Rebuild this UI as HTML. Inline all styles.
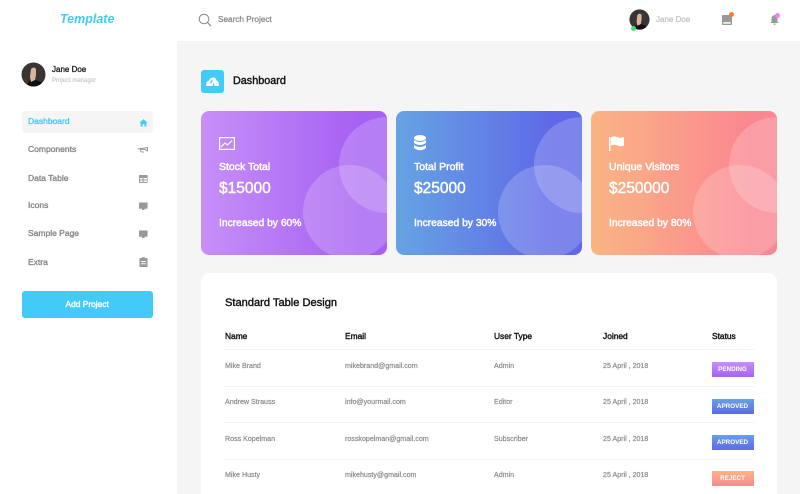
<!DOCTYPE html>
<html><head><meta charset="utf-8"><style>
*{box-sizing:border-box;margin:0;padding:0}
html,body{width:800px;height:494px;overflow:hidden;background:#f5f5f5;font-family:"Liberation Sans",sans-serif}
#w{position:relative;width:800px;height:494px;overflow:hidden;background:#f5f5f5}
.a{position:absolute;white-space:nowrap;line-height:1}
.side{position:absolute;left:0;top:0;width:177px;height:494px;background:#fff}
.top{position:absolute;left:177px;top:0;width:623px;height:41px;background:#fff}
.nav{font-size:8.5px;color:#868686;left:28px;-webkit-text-stroke:.35px currentColor}
.card{position:absolute;top:111px;width:186px;height:144px;border-radius:8px;overflow:hidden;color:#fff}
.card i{position:absolute;border-radius:50%;background:rgba(255,255,255,.19)}
.c1{left:138px;top:6px;width:96px;height:96px}
.c2{left:102px;top:54px;width:94px;height:94px}
.card .a{left:18px;color:#fff;-webkit-text-stroke:.45px #fff}
.t1{top:50.5px;font-size:10.5px}.t2{top:70px;font-size:15.5px}.t3{top:108px;font-size:10.3px}
.th{font-size:8.4px;color:#111;top:331.5px;-webkit-text-stroke:.4px #111}
.td{font-size:7.1px;color:#8a8a8a;-webkit-text-stroke:.2px #8a8a8a}
.line{position:absolute;left:225px;width:529px;height:1px;background:#f3f3f3}
.b{position:absolute;left:711.5px;width:42px;height:15px;color:#fff;font-size:6.3px;font-weight:bold;text-align:center;line-height:15.5px}
.ic{position:absolute}
</style></head><body><div id="w">
<div class="side"></div><div class="top"></div>
<div class="a" style="left:60px;top:13px;font-size:12.5px;font-weight:bold;font-style:italic;color:#43caf8">Template</div>

<svg class="ic" style="left:21px;top:62px" width="25" height="25" viewBox="0 0 25 25"><defs><clipPath id="av"><circle cx="12.5" cy="12.5" r="12"/></clipPath></defs><g clip-path="url(#av)"><rect width="25" height="25" fill="#3a3532"/><path d="M5 25l3-6 4-2 8 3 2 5z" fill="#111"/><path d="M10 7q3-3 5 0l0 6-1 5-4 2-1-5z" fill="#d8b69a"/></g></svg>
<div class="a" style="left:52px;top:65.5px;font-size:8px;color:#222;-webkit-text-stroke:.35px #222">Jane Doe</div>
<div class="a" style="left:52px;top:78px;font-size:6px;color:#c8c8c8;-webkit-text-stroke:.15px #c8c8c8">Project manager</div>

<div style="position:absolute;left:22px;top:111px;width:131px;height:22px;background:#f5f5f5;border-radius:4px"></div>
<div class="a nav" style="top:117px;color:#43caf8">Dashboard</div>
<div class="a nav" style="top:145.3px">Components</div>
<div class="a nav" style="top:173.5px">Data Table</div>
<div class="a nav" style="top:201px">Icons</div>
<div class="a nav" style="top:229px">Sample Page</div>
<div class="a nav" style="top:257.5px">Extra</div>

<svg class="ic" style="left:139px;top:118px" width="9" height="9" viewBox="0 0 9 9"><path d="M4.5 1L8.5 5H7.4V8.5H5.4V6H3.6V8.5H1.600V5H.5z" fill="#43caf8"/></svg>
<svg class="ic" style="left:137px;top:146px" width="11" height="8" viewBox="0 0 11 8"><path d="M.5 3L10.5 1.500V5L8 3.400H3.500Q3 5.500 5 6H7" fill="none" stroke="#999" stroke-width="1"/></svg>
<svg class="ic" style="left:139px;top:175px" width="9" height="8" viewBox="0 0 9 8"><path d="M.5 0h7.600q.5 0 .5.5v7q0 .5-.5.5H.5q-.5 0-.5-.5v-7Q0 0 .5 0zM1 3v1.500h2.500V3zM4.500 3v1.500H8V3zM1 5.500V7h2.500V5.500zM4.500 5.500V7H8V5.500z" fill="#999" fill-rule="evenodd"/></svg>
<svg class="ic" style="left:139px;top:202px" width="9" height="9" viewBox="0 0 9 9"><path d="M.5.5h7.600q.5 0 .5.5v5.200q0 .5-.5.5H5.600v1.300H3V6.700H.5Q0 6.700 0 6.200V1Q0 .5.5.5z" fill="#999"/></svg>
<svg class="ic" style="left:139px;top:229.5px" width="9" height="9" viewBox="0 0 9 9"><path d="M.5.5h7.600q.5 0 .5.5v5.200q0 .5-.5.5H5.600v1.300H3V6.700H.5Q0 6.700 0 6.200V1Q0 .5.5.5z" fill="#999"/></svg>
<svg class="ic" style="left:139px;top:257px" width="9" height="10" viewBox="0 0 9 10"><path d="M.5 1H3Q3.200 0 4.500 0T6 1H8.500V10H.5zM2.200 4V5H6.800V4zM2.200 6.300V7.300H6.800V6.300z" fill="#999" fill-rule="evenodd"/></svg>

<div class="a" style="left:21.7px;top:291px;width:131px;height:26.5px;border-radius:3px;background:#43caf8;color:#fff;font-size:8.4px;-webkit-text-stroke:.4px #fff;text-align:center;line-height:26px">Add Project</div>

<svg class="ic" style="left:198px;top:13px" width="14" height="14" viewBox="0 0 14 14"><circle cx="6" cy="6" r="4.800" fill="none" stroke="#888" stroke-width="1"/><path d="M9.500 9.500L13 13" stroke="#888" stroke-width="1.200"/></svg>
<div class="a" style="left:218px;top:15.5px;font-size:8.2px;color:#8c8c8c;-webkit-text-stroke:.3px #8c8c8c">Search Project</div>

<svg class="ic" style="left:629px;top:9px" width="21" height="21" viewBox="0 0 25 25"><g clip-path="url(#av)"><rect width="25" height="25" fill="#3a3532"/><path d="M5 25l3-6 4-2 8 3 2 5z" fill="#111"/><path d="M10 7q3-3 5 0l0 6-1 5-4 2-1-5z" fill="#d8b69a"/></g></svg>
<div style="position:absolute;left:630.5px;top:26px;width:5px;height:5px;border-radius:50%;background:#3ade7f"></div>
<div class="a" style="left:656px;top:16px;font-size:8px;color:#c4c4c4;-webkit-text-stroke:.3px #c4c4c4">Jane Doe</div>
<svg class="ic" style="left:722px;top:15px" width="10" height="10" viewBox="0 0 10 10"><path d="M1 0H9Q10 0 10 1V9Q10 10 9 10H1Q0 10 0 9V1Q0 0 1 0z" fill="#999"/><path d="M1.200 7H8.800V8.800H1.200z" fill="#eee"/></svg>
<div style="position:absolute;left:729px;top:12px;width:5px;height:5px;border-radius:50%;background:#fb7c2c"></div>
<svg class="ic" style="left:770px;top:15px" width="9" height="10" viewBox="0 0 9 10"><path d="M4.500 0Q7.500.5 7.500 4V6.800L9 8H0L1.500 6.800V4Q1.500.5 4.500 0zM3.200 8.600H5.800Q5.500 10 4.500 10T3.200 8.600z" fill="#999"/></svg>
<div style="position:absolute;left:775px;top:13px;width:5px;height:5px;border-radius:50%;background:#ee82f5"></div>

<div style="position:absolute;left:201px;top:70px;width:23px;height:23px;border-radius:3px;background:#43caf8"></div>
<svg class="ic" style="left:206px;top:77px" width="13" height="9" viewBox="0 0 13 9"><path d="M0 9Q0 4 3 3.500Q4.500 0 8 .5Q10 1 10.500 3.500Q13 4 13 9H8.500L7.500 5.500L6.500 9zM5.800 2.500L3.800 6L5 6.500L7 3z" fill="#fff" fill-rule="evenodd"/></svg>
<div class="a" style="left:233px;top:76.3px;font-size:10.8px;color:#111;-webkit-text-stroke:.4px #111">Dashboard</div>

<div class="card" style="left:201px;background:linear-gradient(90deg,#c78ff8,#a661f2 85%)"><i class="c1"></i><i class="c2"></i>
<svg class="ic" style="left:18px;top:26px" width="16" height="13" viewBox="0 0 16 13"><path d="M.6.6H15.400V12.400H.6zM2 10L6 6L8.500 8L13 3.500" fill="none" stroke="#fff" stroke-width="1.200"/></svg>
<div class="a t1">Stock Total</div><div class="a t2">$15000</div><div class="a t3">Increased by 60%</div></div>

<div class="card" style="left:396px;background:linear-gradient(90deg,#66a3e3,#5f68e8 85%)"><i class="c1"></i><i class="c2"></i>
<svg class="ic" style="left:18px;top:24px" width="12" height="16" viewBox="0 0 12 16"><ellipse cx="6" cy="3" rx="6" ry="3" fill="#fff"/><path d="M0 5Q6 9 12 5V8Q6 12 0 8zM0 10Q6 14 12 10V13Q6 17.500 0 13z" fill="#fff"/></svg>
<div class="a t1">Total Profit</div><div class="a t2">$25000</div><div class="a t3">Increased by 30%</div></div>

<div class="card" style="left:591px;background:linear-gradient(90deg,#fab584,#fb8790 85%)"><i class="c1"></i><i class="c2"></i>
<svg class="ic" style="left:18px;top:25px" width="15" height="15" viewBox="0 0 15 15"><path d="M0 1H1.500V15H0zM2 1.500Q5-.5 8 1T15 1V9.500Q11.500 11 8.500 9.500T2 9.500z" fill="#fff"/></svg>
<div class="a t1">Unique Visitors</div><div class="a t2">$250000</div><div class="a t3">Increased by 80%</div></div>

<div style="position:absolute;left:201px;top:273px;width:576px;height:240px;background:#fff;border-radius:8px"></div>
<div class="a" style="left:225px;top:297.5px;font-size:11.1px;color:#111;-webkit-text-stroke:.4px #111">Standard Table Design</div>
<div class="a th" style="left:225px">Name</div><div class="a th" style="left:345px">Email</div><div class="a th" style="left:494px">User Type</div><div class="a th" style="left:603px">Joined</div><div class="a th" style="left:712px">Status</div>
<div class="line" style="top:349px"></div><div class="line" style="top:386px"></div><div class="line" style="top:422px"></div><div class="line" style="top:459px"></div>

<div class="a td" style="left:225px;top:362.5px">Mike Brand</div><div class="a td" style="left:345px;top:362.5px">mikebrand@gmail.com</div><div class="a td" style="left:494px;top:362.5px">Admin</div><div class="a td" style="left:603px;top:362.5px">25 April , 2018</div>
<div class="b" style="top:362px;background:linear-gradient(180deg,#c78ff8,#a661f2)">PENDING</div>
<div class="a td" style="left:225px;top:399px">Andrew Strauss</div><div class="a td" style="left:345px;top:399px">info@yourmail.com</div><div class="a td" style="left:494px;top:399px">Editor</div><div class="a td" style="left:603px;top:399px">25 April , 2018</div>
<div class="b" style="top:398.5px;background:linear-gradient(180deg,#66a3e3,#5f68e8)">APROVED</div>
<div class="a td" style="left:225px;top:435.5px">Ross Kopelman</div><div class="a td" style="left:345px;top:435.5px">rosskopelman@gmail.com</div><div class="a td" style="left:494px;top:435.5px">Subscriber</div><div class="a td" style="left:603px;top:435.5px">25 April , 2018</div>
<div class="b" style="top:435px;background:linear-gradient(180deg,#66a3e3,#5f68e8)">APROVED</div>
<div class="a td" style="left:225px;top:472px">Mike Husty</div><div class="a td" style="left:345px;top:472px">mikehusty@gmail.com</div><div class="a td" style="left:494px;top:472px">Admin</div><div class="a td" style="left:603px;top:472px">25 April , 2018</div>
<div class="b" style="top:471px;background:linear-gradient(180deg,#fab584,#fb8790)">REJECT</div>
</div></body></html>
